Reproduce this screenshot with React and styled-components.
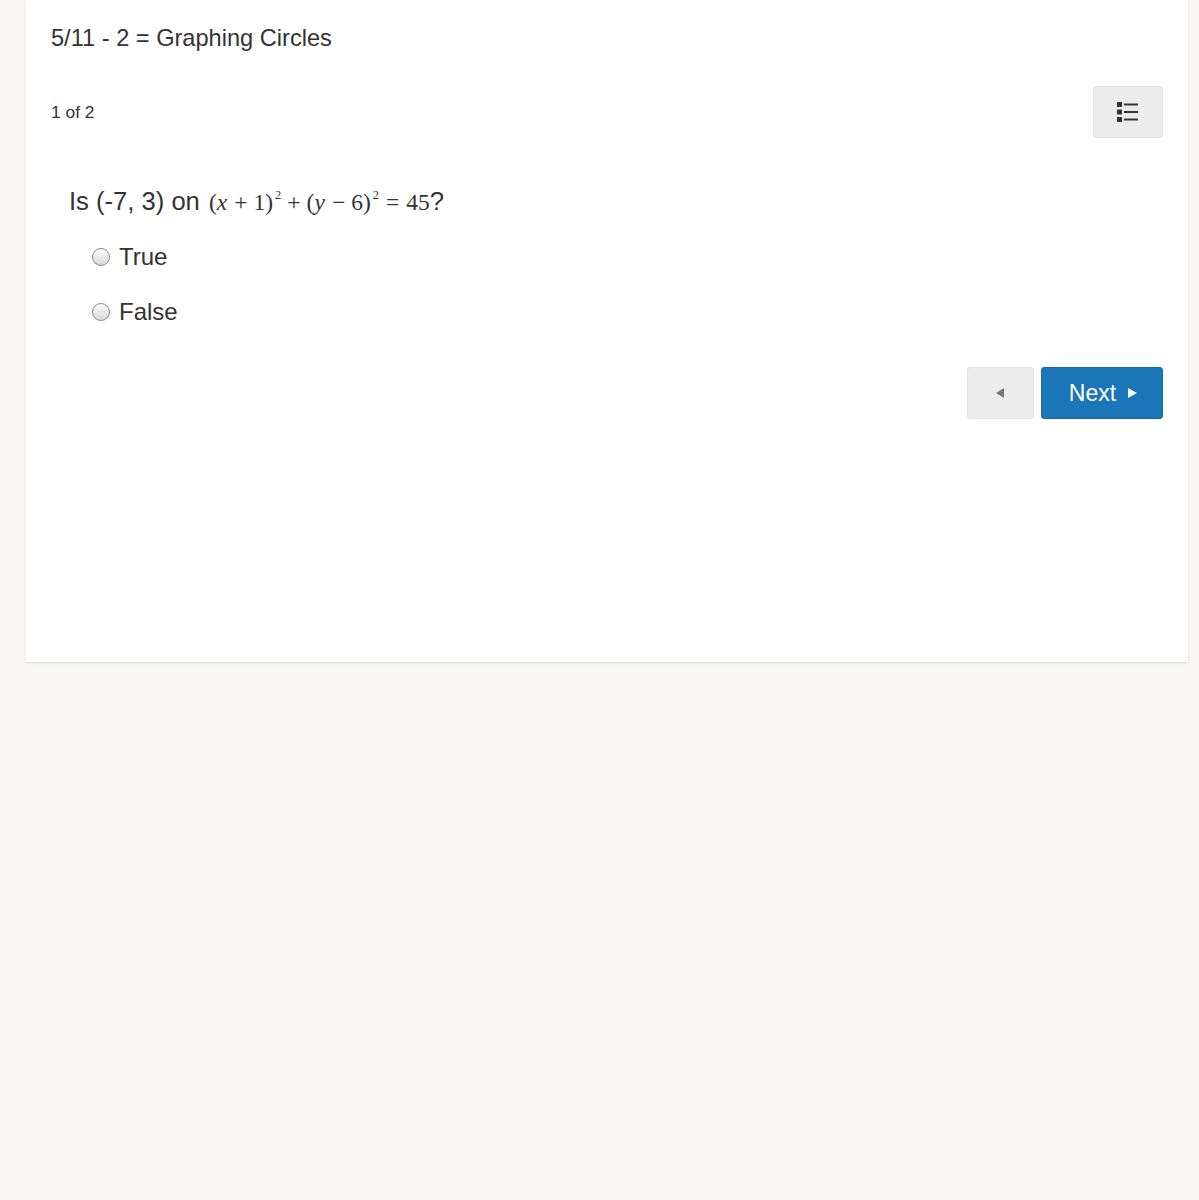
import React from 'react';
import styled, { createGlobalStyle } from 'styled-components';

const GlobalStyle = createGlobalStyle`
  body {
    margin: 0;
    background: #f8f7f5;
    font-family: "Liberation Sans", Arial, sans-serif;
    color: #333;
  }
`;

const Page = styled.div`
  padding: 0 11px 0 26px;
  min-height: 1200px;
`;

const Card = styled.div`
  background: #fff;
  height: 662px;
  box-sizing: border-box;
  padding: 24px 25px 0 25px;
  box-shadow: 0 1px 2px rgba(0, 0, 0, 0.12);
`;

const Title = styled.h1`
  margin: 0;
  font-size: 23.6px;
  font-weight: 400;
  line-height: 28px;
  color: #333;
`;

const Toolbar = styled.div`
  display: flex;
  justify-content: space-between;
  align-items: center;
  margin-top: 34px;
`;

const Counter = styled.span`
  font-size: 17.4px;
  color: #333;
`;

const GreyButton = styled.button`
  display: flex;
  align-items: center;
  justify-content: center;
  width: ${(p) => p.$w}px;
  height: 52px;
  border: 1px solid #e2e2e2;
  border-radius: 3px;
  background: #ececec;
  color: #333;
  padding: 0;
  cursor: pointer;
`;

const Question = styled.div`
  margin: 48px 0 0 18px;
  font-size: 25.6px;
  line-height: 30px;
`;

const Math = styled.span`
  font-family: "Liberation Serif", "Times New Roman", serif;
  font-size: 23.5px;
  margin: 0 0 0 2px;

  i {
    font-style: italic;
    margin-right: 1px;
  }

  sup {
    font-size: 12.5px;
    vertical-align: 11px;
    line-height: 0;
    margin-left: 2px;
  }
`;

const Op = styled.span`
  margin: 0 ${(p) => p.$space}px;
`;

const Options = styled.div`
  display: flex;
  flex-direction: column;
  gap: 25px;
  margin: 25px 0 0 41px;
`;

const Option = styled.label`
  display: flex;
  align-items: center;
  gap: 9px;
  font-size: 24px;
  line-height: 30px;
  cursor: pointer;
`;

const Radio = styled.span`
  width: 18px;
  height: 18px;
  border-radius: 50%;
  border: 1px solid #8a8a8a;
  background: linear-gradient(#fdfdfd, #d8d8d8);
  box-sizing: border-box;
`;

const Nav = styled.div`
  display: flex;
  justify-content: flex-end;
  gap: 7px;
  margin-top: 40px;
`;

const NextButton = styled.button`
  display: flex;
  align-items: center;
  justify-content: center;
  gap: 12px;
  width: 122px;
  height: 52px;
  border: 1px solid #166aa6;
  border-radius: 3px;
  background: #1a76b6;
  color: #fff;
  font-family: inherit;
  font-size: 23px;
  padding: 0 0 0 2px;
  cursor: pointer;
`;

const ListIcon = () => (
  <svg width="24" height="24" viewBox="0 0 24 24" fill="#333">
    <rect x="1" y="2" width="5" height="5" />
    <rect x="8" y="3.5" width="14" height="2" />
    <rect x="1" y="9.5" width="5" height="5" />
    <rect x="8" y="11" width="14" height="2" />
    <rect x="1" y="17" width="5" height="5" />
    <rect x="8" y="18.5" width="14" height="2" />
  </svg>
);

const Tri = ({ dir, color }) => (
  <svg width="9" height="10" viewBox="0 0 9 10" fill={color}>
    {dir === 'left' ? <polygon points="8,0 8,10 0,5" /> : <polygon points="0,0 0,10 9,5" />}
  </svg>
);

export default function App() {
  return (
    <>
      <GlobalStyle />
      <Page>
        <Card>
          <Title>5/11 - 2 = Graphing Circles</Title>
          <Toolbar>
            <Counter>1 of 2</Counter>
            <GreyButton $w={70}>
              <ListIcon />
            </GreyButton>
          </Toolbar>
          <Question>
            Is (-7, 3) on{' '}
            <Math>
              (<i>x</i>
              <Op $space={6}>+</Op>1)<sup>2</sup>
              <Op $space={6}>+</Op>(<i>y</i>
              <Op $space={6}>−</Op>6)<sup>2</sup>
              <Op $space={7}>=</Op>45
            </Math>
            ?
          </Question>
          <Options>
            <Option>
              <Radio />
              True
            </Option>
            <Option>
              <Radio />
              False
            </Option>
          </Options>
          <Nav>
            <GreyButton $w={67}>
              <Tri dir="left" color="#777" />
            </GreyButton>
            <NextButton>
              Next <Tri dir="right" color="#fff" />
            </NextButton>
          </Nav>
        </Card>
      </Page>
    </>
  );
}
